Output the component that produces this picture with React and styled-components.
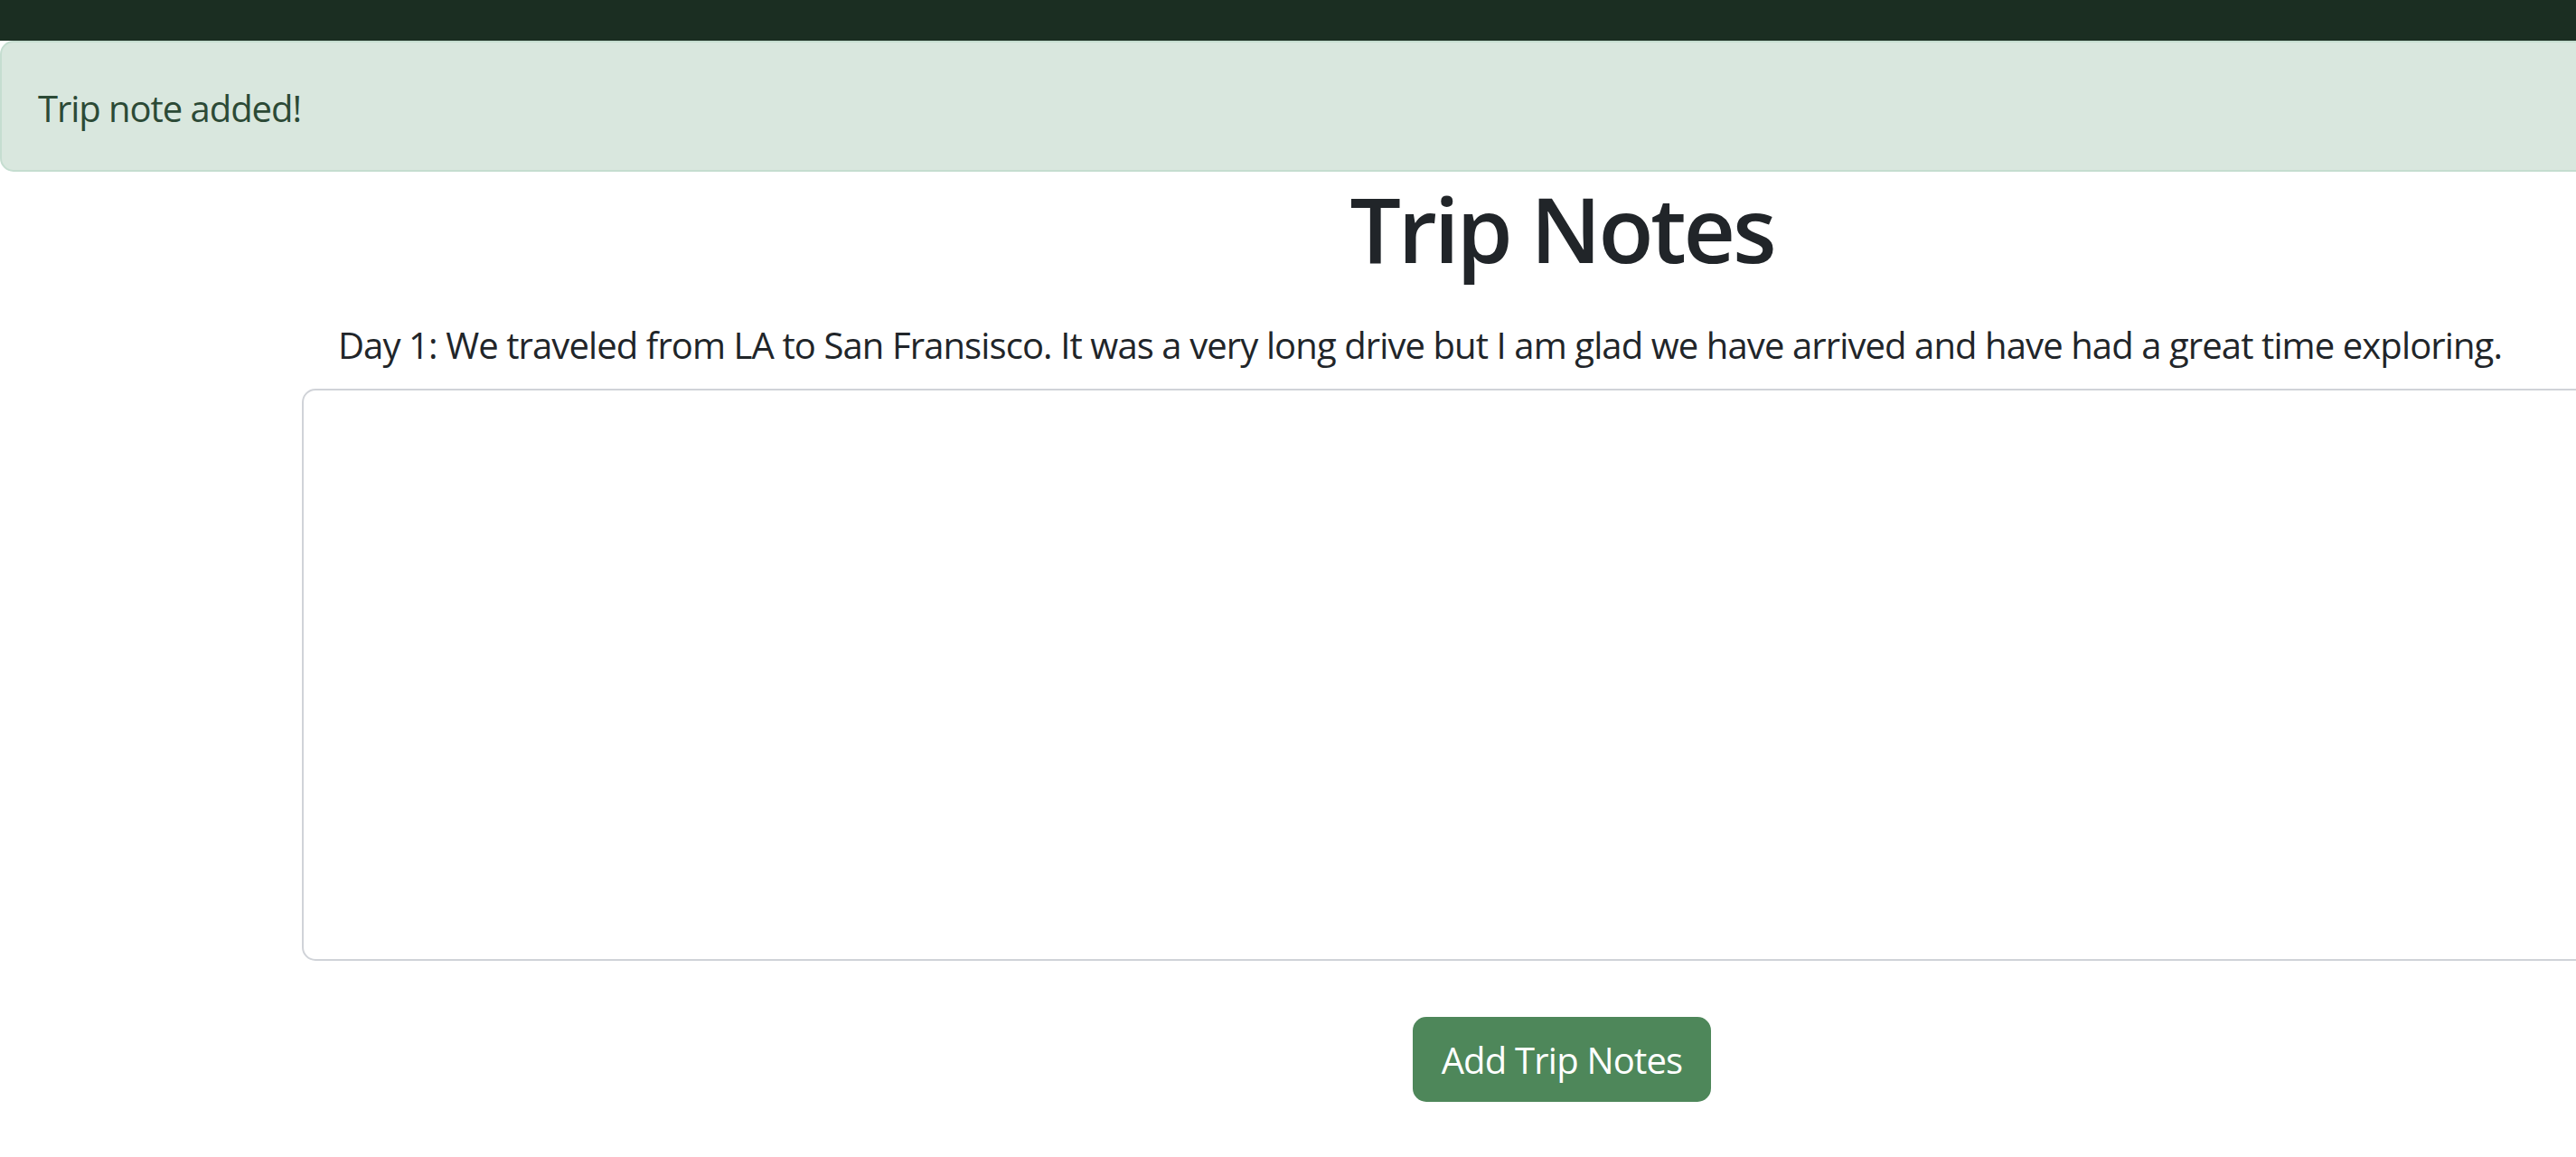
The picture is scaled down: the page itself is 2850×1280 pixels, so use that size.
import React from "react";
import styled, { createGlobalStyle } from "styled-components";

const GlobalStyle = createGlobalStyle`
  html, body {
    margin: 0;
    padding: 0;
    overflow: hidden;
    background: #ffffff;
  }
  body {
    font-family: "Open Sans", "Noto Sans", "Liberation Sans", sans-serif;
    color: #212529;
  }
  * { box-sizing: border-box; }
`;

const Page = styled.div`
  width: 3456px;
  display: flex;
  flex-direction: column;
`;

const TopBar = styled.div`
  height: 45px;
  background: #1b2e22;
`;

const Alert = styled.div`
  height: 145px;
  padding: 43px 40px 37px;
  border: 2.5px solid #c5ddd0;
  border-radius: 15px;
  background: #d9e7de;
  color: #2c4a36;
  font-size: 40px;
  line-height: 60px;
  letter-spacing: -1.05px;
`;

const Content = styled.main`
  display: flex;
  flex-direction: column;
  align-items: center;
  padding: 0 334px;
`;

const Title = styled.h1`
  margin: 2px 0 0;
  font-size: 100px;
  line-height: 120px;
  font-weight: 600;
  letter-spacing: -3.2px;
  color: #212529;
`;

const NoteText = styled.p`
  align-self: stretch;
  margin: 40px 0 18px;
  padding-left: 40px;
  font-size: 40px;
  line-height: 60px;
  letter-spacing: -0.9px;
  white-space: nowrap;
  color: #212529;
`;

const NoteInput = styled.textarea`
  align-self: stretch;
  display: block;
  height: 633px;
  border: 2.5px solid #d0d3d8;
  border-radius: 15px;
  background: #ffffff;
  resize: none;
  outline: none;
  font-family: inherit;
  font-size: 40px;
  padding: 15px 30px;
`;

const Button = styled.button`
  margin-top: 62px;
  height: 94px;
  padding: 2px 32px 0;
  border: none;
  border-radius: 15px;
  background: #4e875a;
  color: #ffffff;
  font-family: inherit;
  font-size: 40px;
  line-height: 60px;
  letter-spacing: -0.8px;
  cursor: pointer;
`;

export default function App() {
  return (
    <>
      <GlobalStyle />
      <Page>
        <TopBar />
        <Alert>Trip note added!</Alert>
        <Content>
          <Title>Trip Notes</Title>
          <NoteText>
            Day 1: We traveled from LA to San Fransisco. It was a very long drive but I am glad we have arrived and have had a great time exploring.
          </NoteText>
          <NoteInput />
          <Button>Add Trip Notes</Button>
        </Content>
      </Page>
    </>
  );
}
